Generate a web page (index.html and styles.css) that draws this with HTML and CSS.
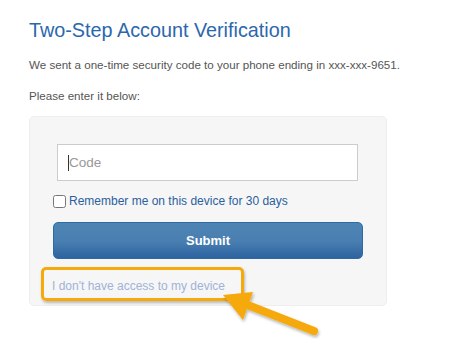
FILE: index.html
```html
<!DOCTYPE html>
<html lang="en">
<head>
    <meta charset="UTF-8">
    <title>Two-Step Account Verification</title>
    <link rel="stylesheet" href="styles.css">
</head>
<body>
<div class="wrap">
    <h1 class="title">Two-Step Account Verification</h1>
    <p class="info">We sent a one-time security code to your phone ending in xxx-xxx-9651.</p>
    <p class="info">Please enter it below:</p>
    <form action="#" class="card">
        <div class="field"><input type="text" name="code" placeholder="Code"><span class="caret"></span></div>
        <label class="remember"><input type="checkbox" name="remember">Remember me on this device for 30 days</label>
        <button type="button">Submit</button>
        <div class="help"><a href="#">I don't have access to my device</a></div>
    </form>
</div>
<!-- annotation arrow -->
<svg class="arrow" width="465" height="341" viewBox="0 0 465 341">
    <defs>
        <filter id="sh" x="-20%" y="-20%" width="140%" height="140%">
            <feDropShadow dx="1" dy="2" stdDeviation="1.5" flood-color="#000" flood-opacity="0.3"/>
        </filter>
    </defs>
    <g filter="url(#sh)" fill="#f5a90a">
        <line x1="240" y1="302" x2="314" y2="331" stroke="#f5a90a" stroke-width="8" stroke-linecap="round"/>
        <polygon points="223,295 253,292 243,320"/>
    </g>
</svg>
</body>
</html>
```

FILE: styles.css
```css
* {
    margin: 0;
    padding: 0;
    box-sizing: border-box;
}
body {
    background-color: #ffffff;
    font-family: "Liberation Sans", Arial, sans-serif;
    position: relative;
    width: 465px;
    height: 341px;
    overflow: hidden;
}
.wrap {
    padding: 18px 0 0 29px;
}
.title {
    font-size: 19.8px;
    font-weight: normal;
    color: #2b67ad;
    line-height: 24px;
}
.info {
    font-size: 11.6px;
    color: #555555;
    line-height: 16px;
}
.title + .info {
    margin-top: 15px;
}
.info + .info {
    margin-top: 15px;
}
.card {
    margin-top: 12px;
    width: 358px;
    height: 190px;
    background-color: #f6f6f6;
    border: 1px solid #eeeeee;
    border-radius: 5px;
    padding: 27px 23px 0 23px;
}
.field {
    position: relative;
    margin: 0 5px 0 4px;
}
.field input {
    display: block;
    width: 100%;
    height: 37px;
    border: 1px solid #cccccc;
    background: #ffffff;
    padding-left: 11px;
    font-size: 13.5px;
    font-family: "Liberation Sans", Arial, sans-serif;
    color: #555;
}
.field input::placeholder {
    color: #999999;
}
.caret {
    position: absolute;
    left: 11px;
    top: 11px;
    width: 1px;
    height: 16px;
    background: #333;
}
.remember {
    display: flex;
    align-items: center;
    margin-top: 12px;
    font-size: 12px;
    color: #2b5f9e;
    line-height: 16px;
}
.remember input {
    width: 13px;
    height: 13px;
    margin: 0 3px 0 0;
}
.card button {
    display: block;
    width: 310px;
    height: 37px;
    margin-top: 13px;
    border: 1px solid #2e6aa4;
    border-radius: 5px;
    background: linear-gradient(to bottom, #4d84b4 0%, #4a80b1 50%, #2d63a0 100%);
    color: #ffffff;
    font-weight: bold;
    font-size: 13px;
    font-family: "Liberation Sans", Arial, sans-serif;
}
.help {
    width: 203px;
    height: 34px;
    margin: 8px 0 0 -12px;
    border: 3px solid #f5a90a;
    border-radius: 5px;
    box-shadow: 1px 2px 3px rgba(0, 0, 0, 0.25);
    padding: 6px 0 0 8px;
}
.help a {
    font-size: 12px;
    color: #9fb3d6;
    text-decoration: none;
}
.arrow {
    position: absolute;
    left: 0;
    top: 0;
    pointer-events: none;
}
```
